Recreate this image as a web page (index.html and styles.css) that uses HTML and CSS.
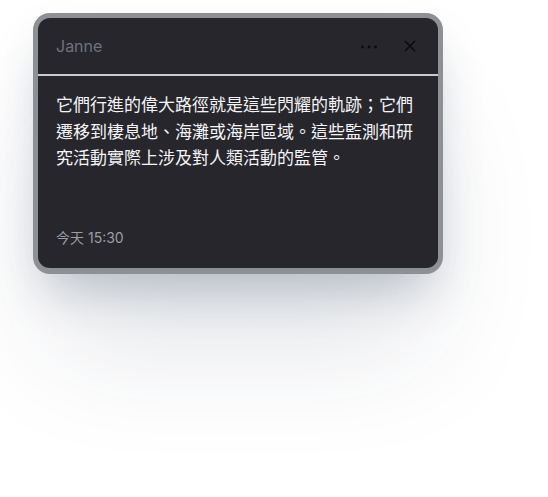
FILE: index.html
```html
<!DOCTYPE html>
<html lang="zh-Hant">
<head>
<meta charset="utf-8">
<link rel="stylesheet" href="styles.css">
</head>
<body>
<div class="stage">
  <div class="card">
    <div class="header">
      <span class="name">Janne</span>
      <div class="actions">
        <svg class="icon dots" width="18" height="6" viewBox="0 0 18 6"><circle cx="2.5" cy="3" r="1.4"/><circle cx="9" cy="3" r="1.4"/><circle cx="15.5" cy="3" r="1.4"/></svg>
        <svg class="icon close" width="12" height="12" viewBox="0 0 12 12"><path d="M1 1L11 11M11 1L1 11"/></svg>
      </div>
    </div>
    <div class="divider"></div>
    <p class="body">它們行進的偉大路徑就是這些閃耀的軌跡；它們遷移到棲息地、海灘或海岸區域。這些監測和研究活動實際上涉及對人類活動的監管。</p>
    <div class="footer">今天 15:30</div>
  </div>
</div>
</body>
</html>
```

FILE: styles.css
```css
html, body {
  margin: 0;
  padding: 0;
  background: #ffffff;
}
.stage {
  box-sizing: border-box;
  height: 497px;
  padding: 13px 0 0 33px;
  overflow: hidden;
}
.card {
  box-sizing: border-box;
  width: 410px;
  height: 261px;
  border: 5px solid #8d9095;
  border-bottom-width: 6px;
  border-radius: 17px;
  background: #27262c;
  display: flex;
  flex-direction: column;
  overflow: hidden;
  box-shadow: 0 25px 50px -12px rgba(30, 50, 75, 0.26), 0 90px 120px -20px rgba(30, 50, 75, 0.13);
  font-family: Inter, "Liberation Sans", "Noto Sans CJK TC", sans-serif;
}
.header {
  height: 56px;
  display: flex;
  align-items: center;
  justify-content: space-between;
  padding: 0 22px 0 18px;
  flex: none;
}
.name {
  font-size: 16px;
  color: #6b727e;
}
.actions {
  display: flex;
  align-items: center;
  gap: 26px;
}
.icon {
  display: block;
}
.dots {
  fill: #0c0c0e;
  margin-top: 1px;
}
.close {
  stroke: #0c0c0e;
  stroke-width: 1.6;
  fill: none;
}
.divider {
  height: 2px;
  background: #cacacf;
  flex: none;
}
.body {
  margin: 0;
  padding: 15px 18px 0 18px;
  font-family: "Noto Sans CJK TC", sans-serif;
  font-size: 17px;
  line-height: 26.5px;
  color: #f4f4f6;
  flex: 1;
}
.footer {
  padding: 0 18px 20px 18px;
  font-size: 14px;
  line-height: 20px;
  color: #9c9ca3;
  font-family: Inter, "Noto Sans CJK TC", sans-serif;
}
```
